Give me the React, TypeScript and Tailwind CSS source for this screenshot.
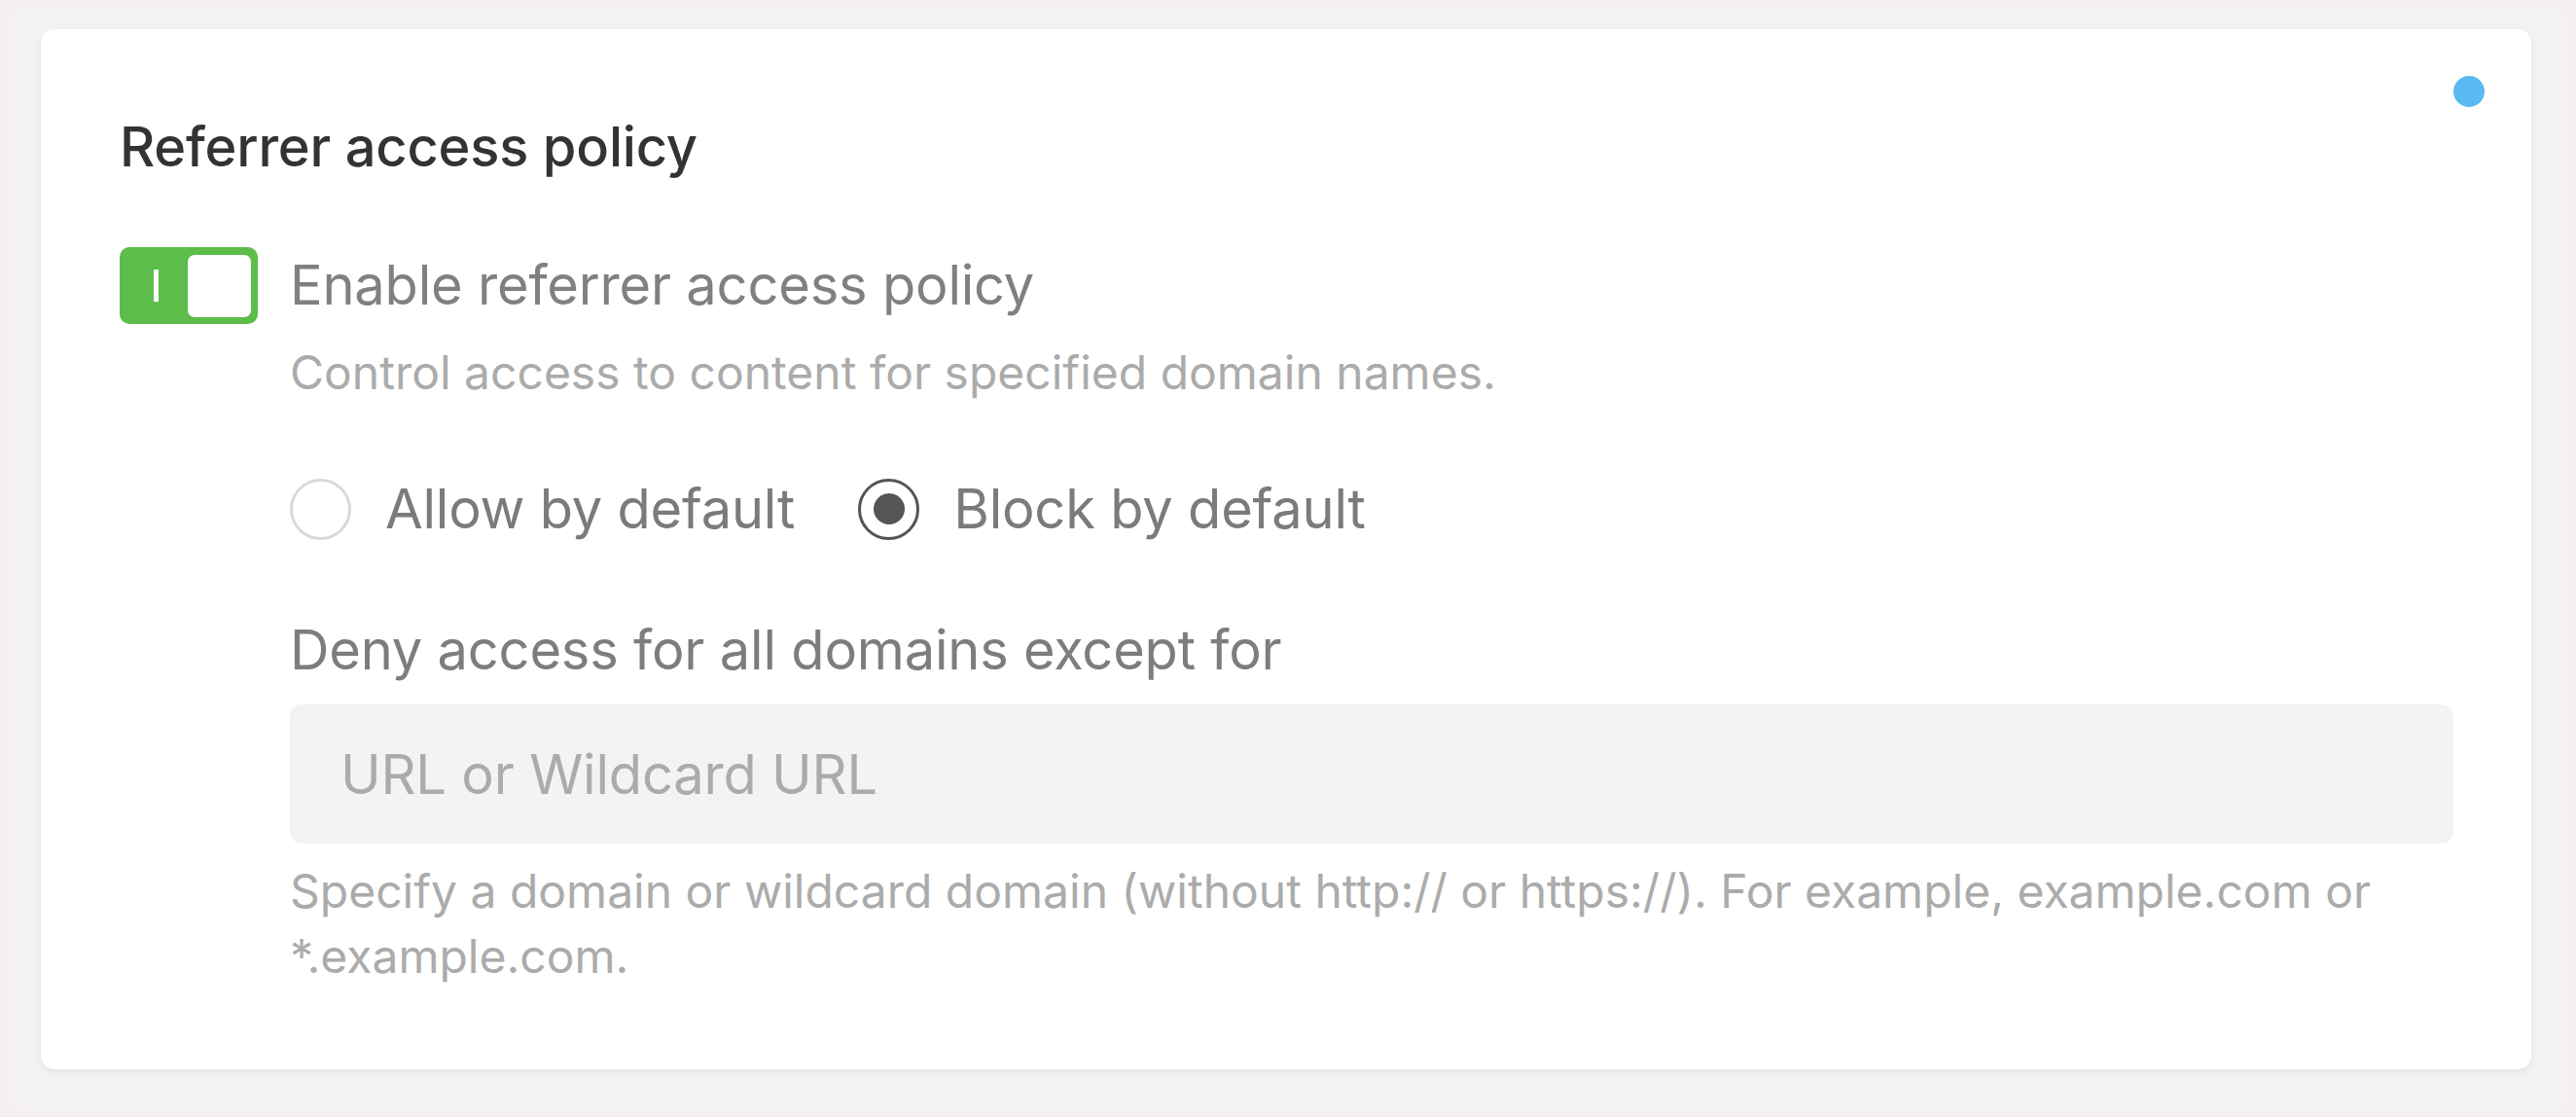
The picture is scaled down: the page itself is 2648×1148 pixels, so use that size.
import React from "react";

export default function App() {
  return (
    <div className="h-[1148px] w-full bg-[#f5efef] p-[8px] font-['Inter',sans-serif]">
      <div className="h-full w-full rounded-[20px] bg-[#f3f3f3] pl-[34px] pr-[38px] pt-[22px]">
        <div className="relative w-full rounded-[14px] bg-white pl-[81px] pr-[80px] pt-[87px] pb-[83px] shadow-[0_3px_8px_rgba(0,0,0,0.07)]">
          <span className="absolute right-[48px] top-[48px] h-[32px] w-[32px] rounded-full bg-[#5ab9f1]" />
          <h2 className="text-[56px] font-medium leading-[68px] tracking-[-0.2px] text-[#333333]">
            Referrer access policy
          </h2>
          <div className="mt-[69px] flex items-start gap-[33px]">
            <button
              type="button"
              className="relative flex h-[79px] w-[142px] shrink-0 items-center rounded-[10px] bg-[#5cbd4b]"
            >
              <span className="ml-[35px] h-[33px] w-[5px] bg-white" />
              <span className="absolute right-[7px] top-[8px] h-[64px] w-[65px] rounded-[7px] bg-white" />
            </button>
            <div className="flex min-w-0 flex-1 flex-col">
              <div className="text-[56px] leading-[79px] tracking-[-0.2px] text-[#808080]">
                Enable referrer access policy
              </div>
              <div className="mt-[21px] text-[48px] leading-[58px] text-[#ababab]">
                Control access to content for specified domain names.
              </div>
              <div className="mt-[77px] flex h-[68px] items-center">
                <label className="flex items-center gap-[35px]">
                  <span className="h-[63px] w-[63px] rounded-full border-[3px] border-[#d9d9d9]" />
                  <span className="text-[56px] leading-[68px] tracking-[-0.2px] text-[#7b7b7b]">Allow by default</span>
                </label>
                <label className="ml-[65px] flex items-center gap-[35px]">
                  <span className="flex h-[63px] w-[63px] items-center justify-center rounded-full border-[3px] border-[#555555]">
                    <span className="h-[32px] w-[32px] rounded-full bg-[#555555]" />
                  </span>
                  <span className="text-[56px] leading-[68px] tracking-[-0.2px] text-[#7b7b7b]">Block by default</span>
                </label>
              </div>
              <div className="mt-[77px] text-[56px] leading-[68px] tracking-[-0.2px] text-[#7d7d7d]">
                Deny access for all domains except for
              </div>
              <input
                type="text"
                placeholder="URL or Wildcard URL"
                className="mt-[22px] h-[143px] w-full rounded-[12px] bg-[#f3f3f3] pl-[52px] text-[56px] leading-[68px] tracking-[-0.2px] text-[#555555] outline-none placeholder:text-[#ababab]"
              />
              <p className="mt-[15px] text-[48px] leading-[67px] text-[#ababab]">
                Specify a domain or wildcard domain (without http:// or https://). For example, example.com or *.example.com.
              </p>
            </div>
          </div>
        </div>
      </div>
    </div>
  );
}
